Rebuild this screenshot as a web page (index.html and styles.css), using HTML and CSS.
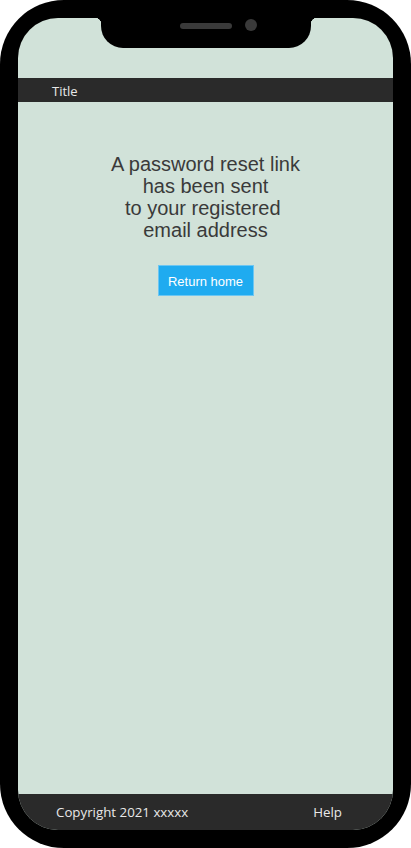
FILE: index.html
```html
<!DOCTYPE html>
<html>
<head>
<meta charset="utf-8">
<link rel="stylesheet" href="styles.css">
</head>
<body>
<div class="phone">
  <div class="screen">
    <div class="status"></div>
    <div class="titlebar"><span class="title">Title</span></div>
    <main class="content">
      <p class="message">A password reset link<br>has been sent<br>to your registered&nbsp;<br>email address</p>
      <button class="btn">Return home</button>
    </main>
    <footer class="footer">
      <span>Copyright 2021 xxxxx</span>
      <span class="help">Help</span>
    </footer>
  </div>
  <div class="notch">
    <span class="speaker"></span>
    <span class="camera"></span>
  </div>
</div>
</body>
</html>
```
FILE: styles.css
```css
html, body {
  margin: 0;
  padding: 0;
  background: #ffffff;
}
.phone {
  position: relative;
  width: 411px;
  height: 848px;
  box-sizing: border-box;
  padding: 18px;
  background: #000;
  border-radius: 64px;
  display: flex;
}
.screen {
  flex: 1;
  background: #d1e2d9;
  border-radius: 40px;
  overflow: hidden;
  display: flex;
  flex-direction: column;
}
.status {
  height: 60px;
  flex: none;
}
.titlebar {
  height: 24px;
  flex: none;
  background: #2a2a2a;
  display: flex;
  align-items: center;
  padding-left: 34px;
  padding-top: 1px;
  box-sizing: border-box;
}
.title {
  font-family: "Open Sans", sans-serif;
  font-size: 13px;
  color: #e8e8e8;
}
.content {
  flex: 1;
  display: flex;
  flex-direction: column;
  align-items: center;
  padding-top: 51px;
}
.message {
  margin: 0;
  font-family: "Liberation Sans", Arial, sans-serif;
  font-size: 20px;
  line-height: 22px;
  color: #3a3a3a;
  text-align: center;
}
.btn {
  margin-top: 24px;
  width: 96px;
  height: 31px;
  background: #1fabf0;
  border: 1px solid #6cc6f2;
  color: #ffffff;
  font-family: "Liberation Sans", Arial, sans-serif;
  font-size: 13px;
  padding: 1px 0 0;
}
.footer {
  height: 36px;
  flex: none;
  background: #2a2a2a;
  display: flex;
  align-items: center;
  justify-content: space-between;
  padding: 0 51px 0 38px;
  font-family: "Open Sans", sans-serif;
  font-size: 13.3px;
  color: #e8e8e8;
}
.notch {
  position: absolute;
  top: 18px;
  left: 101px;
  width: 210px;
  height: 30px;
  background: #000;
  border-radius: 0 0 22px 22px;
}
.notch::before,
.notch::after {
  content: "";
  position: absolute;
  top: 0;
  width: 6px;
  height: 6px;
}
.notch::before {
  left: -6px;
  background: radial-gradient(circle at 0 100%, transparent 6px, #000 6.5px);
}
.notch::after {
  right: -6px;
  background: radial-gradient(circle at 100% 100%, transparent 6px, #000 6.5px);
}
.speaker {
  position: absolute;
  left: 79px;
  top: 5px;
  width: 52px;
  height: 6px;
  border-radius: 3px;
  background: #3a3a3a;
}
.camera {
  position: absolute;
  left: 144px;
  top: 1px;
  width: 12px;
  height: 12px;
  border-radius: 50%;
  background: #3a3a3a;
}
```
